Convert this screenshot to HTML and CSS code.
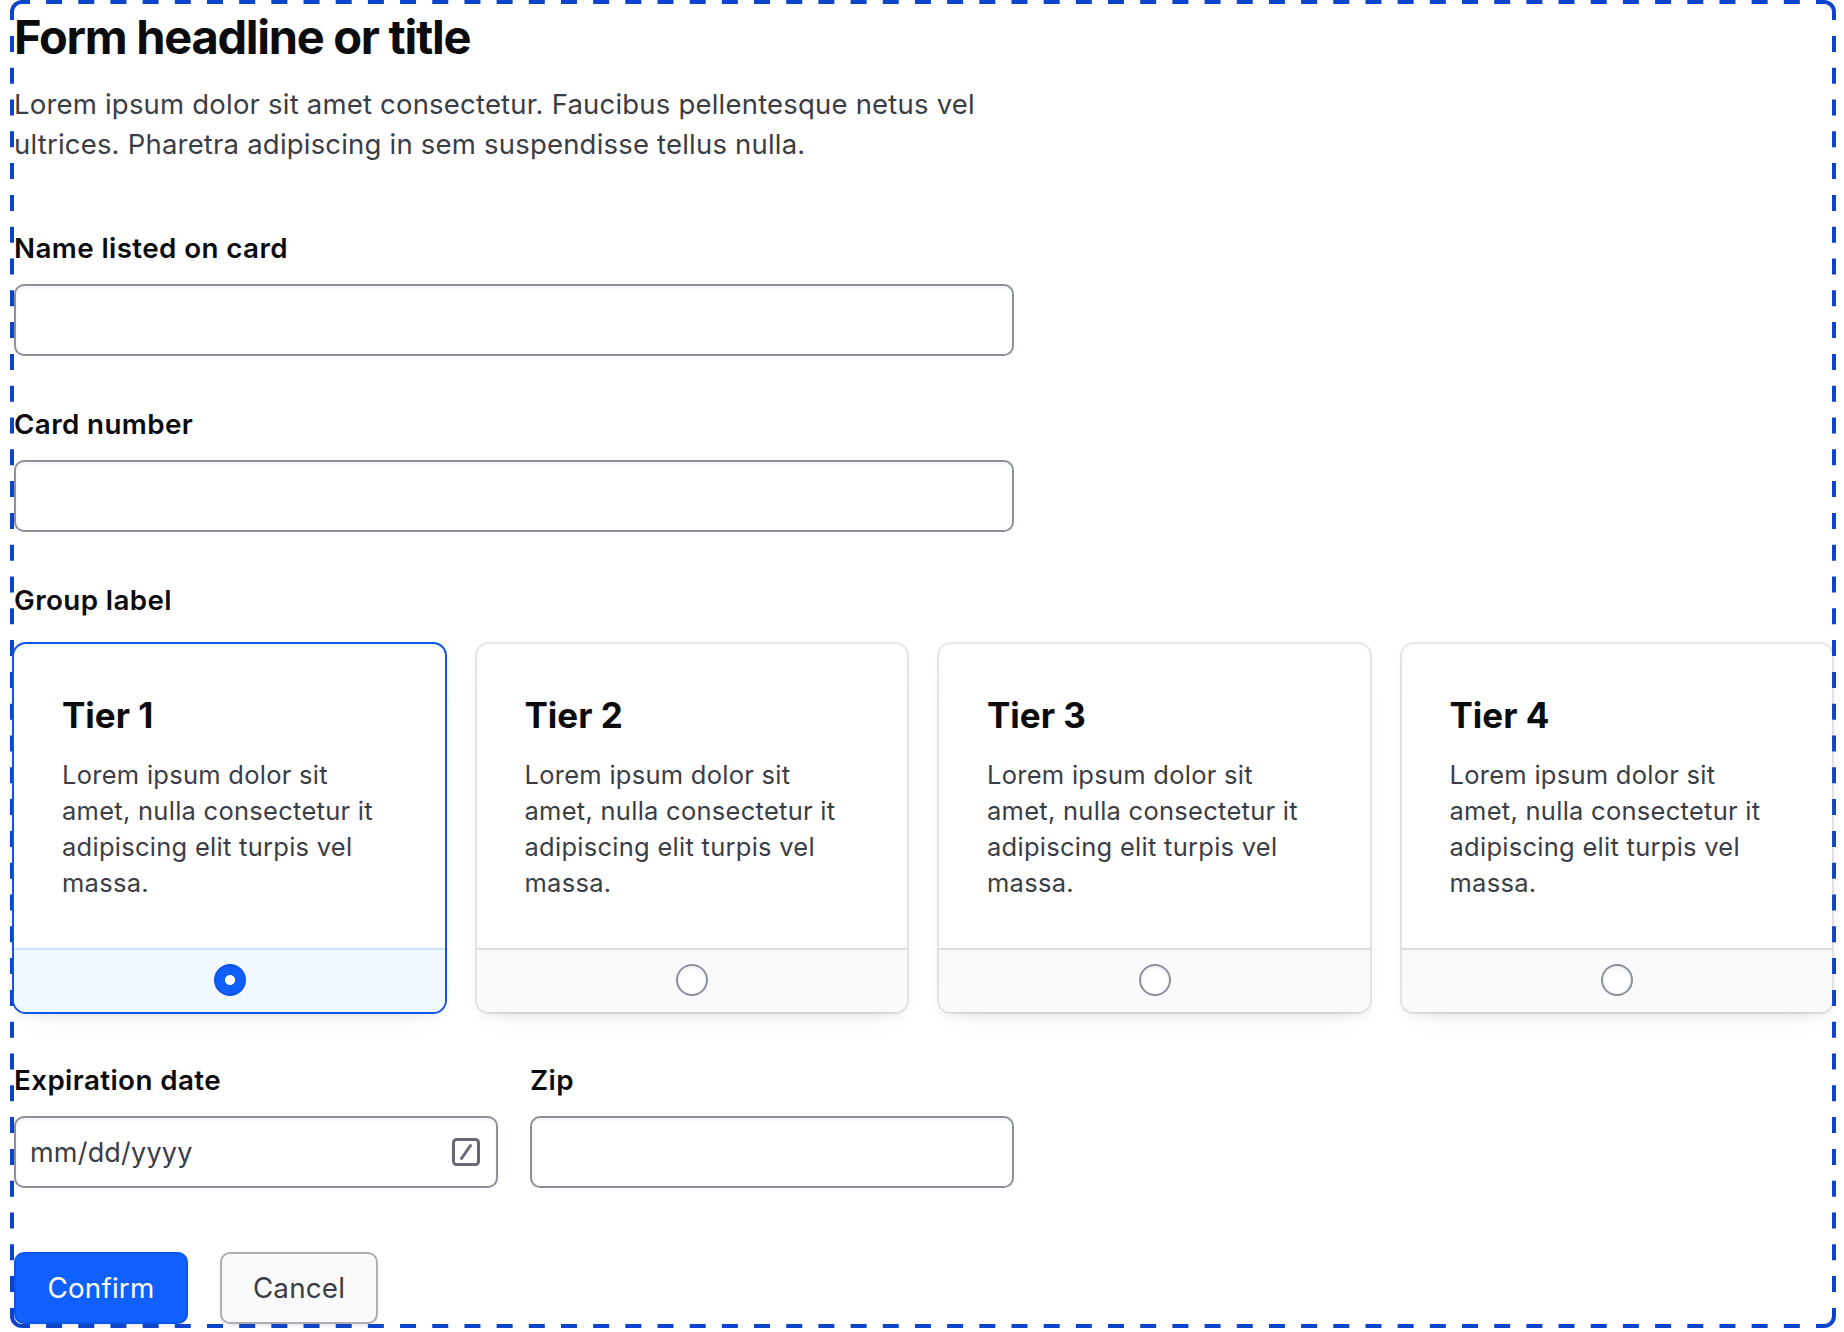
FILE: index.html
```html
<!DOCTYPE html>
<html lang="en">
<head>
<meta charset="utf-8">
<title>Form</title>
<link rel="stylesheet" href="styles.css">
</head>
<body>
<main class="frame">
  <svg class="frame-outline" width="1826" height="1328" viewBox="0 0 1826 1328" fill="none" aria-hidden="true">
    <path d="M2 20V12A10 10 0 0 1 12 2H20M1806 2H1814A10 10 0 0 1 1824 12V20M1824 1308V1316A10 10 0 0 1 1814 1326H1806M20 1326H12A10 10 0 0 1 2 1316V1308"/>
    <path stroke-dasharray="16 16.18" d="M36.09 2H1796M36.09 1326H1796"/>
    <path stroke-dasharray="16 15.8" d="M2 35.9V1300M1824 35.9V1300"/>
  </svg>
  <form class="form">
    <header class="form-header">
      <h1 class="form-title">Form headline or title</h1>
      <p class="form-description">Lorem ipsum dolor sit amet consectetur. Faucibus pellentesque netus vel<br>ultrices. Pharetra adipiscing in sem suspendisse tellus nulla.</p>
    </header>
    <div class="field">
      <label class="label" for="name">Name listed on card</label>
      <input class="input" id="name" type="text">
    </div>
    <div class="field">
      <label class="label" for="card">Card number</label>
      <input class="input" id="card" type="text">
    </div>
    <div class="group">
      <div class="label">Group label</div>
      <div class="cards">
        <label class="card card-checked">
          <span class="card-body"><strong class="card-title">Tier 1</strong><span class="card-text">Lorem ipsum dolor sit<br>amet, nulla consectetur it<br>adipiscing elit turpis vel<br>massa.</span></span>
          <span class="card-control"><input class="radio" type="radio" name="tier" checked></span>
        </label>
        <label class="card">
          <span class="card-body"><strong class="card-title">Tier 2</strong><span class="card-text">Lorem ipsum dolor sit<br>amet, nulla consectetur it<br>adipiscing elit turpis vel<br>massa.</span></span>
          <span class="card-control"><input class="radio" type="radio" name="tier"></span>
        </label>
        <label class="card">
          <span class="card-body"><strong class="card-title">Tier 3</strong><span class="card-text">Lorem ipsum dolor sit<br>amet, nulla consectetur it<br>adipiscing elit turpis vel<br>massa.</span></span>
          <span class="card-control"><input class="radio" type="radio" name="tier"></span>
        </label>
        <label class="card">
          <span class="card-body"><strong class="card-title">Tier 4</strong><span class="card-text">Lorem ipsum dolor sit<br>amet, nulla consectetur it<br>adipiscing elit turpis vel<br>massa.</span></span>
          <span class="card-control"><input class="radio" type="radio" name="tier"></span>
        </label>
      </div>
    </div>
    <div class="field-row">
      <div class="field">
        <div class="label">Expiration date</div>
        <div class="input date-input">
          <span class="date-text">mm/dd/yyyy</span>
          <svg class="date-icon" width="28" height="28" viewBox="0 0 28 28" fill="none" aria-hidden="true"><rect x="1.5" y="1.5" width="25" height="25" rx="3"/><path d="M18.5 7.5L9.5 20.5"/></svg>
        </div>
      </div>
      <div class="field">
        <label class="label" for="zip">Zip</label>
        <input class="input" id="zip" type="text">
      </div>
    </div>
    <div class="actions">
      <button class="button button-primary" type="button">Confirm</button>
      <button class="button button-secondary" type="button">Cancel</button>
    </div>
  </form>
</main>
</body>
</html>
```
FILE: styles.css
```css
* { box-sizing: border-box; }

body {
  margin: 0;
  background: #fff;
  color: #3b3d45;
  font-family: Inter, "Liberation Sans", sans-serif;
  font-size: 27px;
  line-height: 40px;
}

.frame {
  position: relative;
  width: 1826px;
  height: 1328px;
  margin-left: 10px;
  padding: 4px;
}

.frame-outline {
  position: absolute;
  inset: 0;
  stroke: #0d44cc;
  stroke-width: 4;
}

.form {
  position: relative;
  display: flex;
  flex-direction: column;
  gap: 48px;
}

.form-header {
  display: flex;
  flex-direction: column;
  gap: 15px;
  margin-bottom: 16px;
  padding-top: 1px;
}

.form-title {
  margin: 0;
  color: #0c0c0e;
  font-size: 47px;
  font-weight: 700;
  line-height: 64px;
  letter-spacing: -1.27px;
}

.form-description {
  margin: 0;
  font-size: 27.5px;
  letter-spacing: 0.2px;
}

.field {
  display: flex;
  flex-direction: column;
  gap: 16px;
  width: 1000px;
}

.label {
  height: 40px;
  color: #0c0c0e;
  font-size: 27.75px;
  font-weight: 600;
  letter-spacing: 0.4px;
}

.input {
  width: 100%;
  height: 72px;
  padding: 0 16px 0 14px;
  border: 2px solid #8c909c;
  border-radius: 10px;
  background: #fff;
  box-shadow: inset 0 2px 4px #656a761a;
  font: inherit;
}

.group {
  display: flex;
  flex-direction: column;
  gap: 24px;
}

.cards {
  display: grid;
  grid-template-columns: repeat(4, 1fr);
  gap: 32px;
}

.card {
  display: flex;
  flex-direction: column;
  height: 368px;
  overflow: hidden;
  border-radius: 12px;
  background: #fff;
  box-shadow: 0 0 0 2px #656a7626, 0 4px 6px #656a761a, 0 16px 28px -20px #656a7633;
}

.card-checked {
  box-shadow: 0 0 0 2px #0c56e9, 0 4px 6px #656a761a, 0 16px 28px -20px #656a7633;
}

.card-body {
  display: flex;
  flex: 1;
  flex-direction: column;
  gap: 18px;
  padding: 47px 48px;
}

.card-title {
  color: #0c0c0e;
  font-size: 35px;
  font-weight: 700;
  line-height: 48px;
}

.card-text {
  font-size: 25.5px;
  line-height: 36px;
  letter-spacing: 0.27px;
  white-space: nowrap;
}

.card-control {
  display: flex;
  justify-content: center;
  height: 64px;
  padding: 14px 0 0 1px;
  border-top: 2px solid #dbdce0;
  background: #fafafa;
}

.card-checked .card-control {
  border-color: #cce3fe;
  background: #f2f8ff;
}

.radio {
  appearance: none;
  width: 32px;
  height: 32px;
  margin: 0;
  border: 2px solid #8c909c;
  border-radius: 50%;
  background: #fff;
  box-shadow: inset 0 2px 4px #656a761a;
}

.radio:checked {
  border-color: #0c56e9;
  background: radial-gradient(circle, #fff 4.7px, #1060ff 5.3px);
  box-shadow: none;
}

.field-row {
  display: grid;
  grid-template-columns: 1fr 1fr;
  gap: 32px;
  width: 1000px;
}

.field-row .field { width: auto; }

.date-input {
  display: flex;
  align-items: center;
  justify-content: space-between;
}

.date-text {
  padding-top: 2px;
  letter-spacing: 0.2px;
}

.date-icon {
  stroke: #656a76;
  stroke-width: 3;
  stroke-linecap: round;
}

.actions {
  display: flex;
  gap: 32px;
  margin-top: 16px;
}

.button {
  height: 72px;
  padding: 0;
  border: 2px solid;
  border-radius: 10px;
  box-shadow: 0 2px 2px #656a760d, 0 4px 4px #656a760d;
  font: inherit;
  font-size: 27.75px;
  letter-spacing: 0.2px;
}

.button-primary {
  width: 174px;
  border-color: #0c56e9;
  background: #1060ff;
  color: #fff;
}

.button-secondary {
  width: 158px;
  border-color: #adaeb2;
  background: #fafafa;
  color: #3b3d45;
}
```
